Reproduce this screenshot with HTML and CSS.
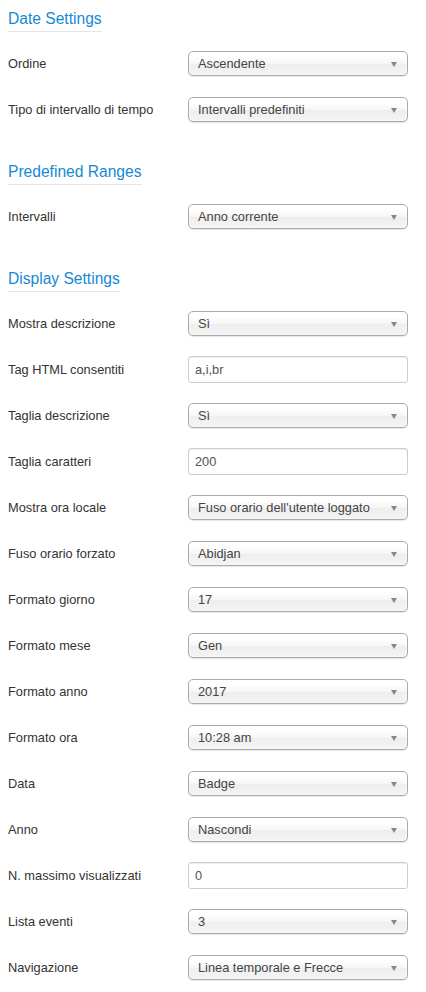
FILE: index.html
```html
<!DOCTYPE html>
<html lang="it">
<head>
<meta charset="utf-8">
<title>Settings</title>
<link rel="stylesheet" href="styles.css">
</head>
<body>
<div class="page">
  <section class="group">
    <h2 class="legend">Date Settings</h2>
    <div class="row"><span class="label">Ordine</span><div class="select">Ascendente</div></div>
    <div class="row"><span class="label">Tipo di intervallo di tempo</span><div class="select">Intervalli predefiniti</div></div>
  </section>
  <section class="group">
    <h2 class="legend">Predefined Ranges</h2>
    <div class="row"><span class="label">Intervalli</span><div class="select">Anno corrente</div></div>
  </section>
  <section class="group">
    <h2 class="legend">Display Settings</h2>
    <div class="row"><span class="label">Mostra descrizione</span><div class="select">Sì</div></div>
    <div class="row"><span class="label">Tag HTML consentiti</span><div class="input">a,i,br</div></div>
    <div class="row"><span class="label">Taglia descrizione</span><div class="select">Sì</div></div>
    <div class="row"><span class="label">Taglia caratteri</span><div class="input">200</div></div>
    <div class="row"><span class="label">Mostra ora locale</span><div class="select">Fuso orario dell'utente loggato</div></div>
    <div class="row"><span class="label">Fuso orario forzato</span><div class="select">Abidjan</div></div>
    <div class="row"><span class="label">Formato giorno</span><div class="select">17</div></div>
    <div class="row"><span class="label">Formato mese</span><div class="select">Gen</div></div>
    <div class="row"><span class="label">Formato anno</span><div class="select">2017</div></div>
    <div class="row"><span class="label">Formato ora</span><div class="select">10:28 am</div></div>
    <div class="row"><span class="label">Data</span><div class="select">Badge</div></div>
    <div class="row"><span class="label">Anno</span><div class="select">Nascondi</div></div>
    <div class="row"><span class="label">N. massimo visualizzati</span><div class="input">0</div></div>
    <div class="row"><span class="label">Lista eventi</span><div class="select">3</div></div>
    <div class="row"><span class="label">Navigazione</span><div class="select">Linea temporale e Frecce</div></div>
  </section>
</div>
</body>
</html>
```
FILE: styles.css
```css
html, body {
  margin: 0;
  padding: 0;
  background: #ffffff;
}
body {
  font-family: "Liberation Sans", Arial, sans-serif;
  font-size: 13px;
  color: #333333;
}
.page {
  padding: 7px 8px 0 8px;
}
.group {
  display: flex;
  flex-direction: column;
  align-items: flex-start;
}
.group + .group {
  margin-top: 28px;
}
.legend {
  margin: 0 0 8px 0;
  font-size: 15.6px;
  font-weight: normal;
  line-height: 24px;
  color: #1589d4;
  border-bottom: 1px solid #e5e5e5;
}
.row {
  display: flex;
  align-items: center;
  height: 46px;
  width: 400px;
}
.label {
  width: 180px;
  flex: none;
  font-size: 12.8px;
  color: #333333;
}
.select {
  position: relative;
  box-sizing: border-box;
  width: 220px;
  height: 25px;
  line-height: 23px;
  padding: 0 24px 0 9px;
  border: 1px solid #aaaaaa;
  border-radius: 5px;
  background: linear-gradient(to bottom, #ffffff 20%, #f6f6f6 50%, #eeeeee 52%, #f4f4f4 100%);
  box-shadow: 0 0 3px #ffffff inset, 0 1px 1px rgba(0,0,0,0.1);
  font-size: 12.8px;
  color: #444444;
  white-space: nowrap;
  overflow: hidden;
}
.select::after {
  content: "";
  position: absolute;
  right: 10px;
  top: 10px;
  border-left: 3.5px solid transparent;
  border-right: 3.5px solid transparent;
  border-top: 5px solid #888888;
}
.input {
  box-sizing: border-box;
  width: 220px;
  height: 27px;
  line-height: 25px;
  padding: 0 6px;
  border: 1px solid #cccccc;
  border-radius: 3px;
  background: #ffffff;
  box-shadow: inset 0 1px 1px rgba(0,0,0,0.075);
  font-size: 12.8px;
  color: #555555;
}
```
